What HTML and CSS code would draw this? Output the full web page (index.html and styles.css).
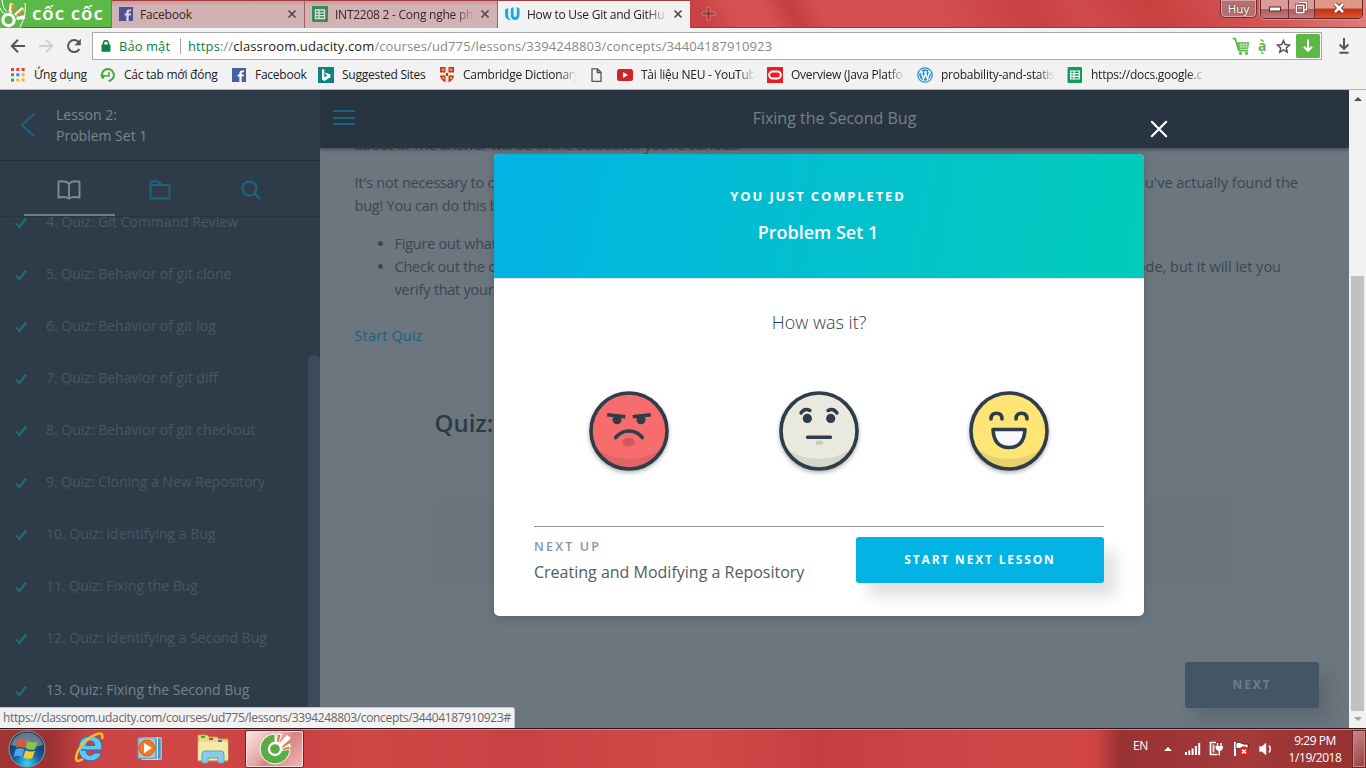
FILE: index.html
```html
<!DOCTYPE html>
<html lang="vi">
<head>
<meta charset="utf-8">
<title>How to Use Git and GitHub</title>
<link rel="stylesheet" href="styles.css">
</head>
<body>
<div class="screen">
  <div class="tabstrip">
    <div class="brand">
      <svg width="28" height="28" viewBox="0 0 28 28"><path d="M0 0h24Q28 14 22 28H0z" fill="#5cb947"/><path d="M2 0Q3 9 7 12M0 8Q2 13 5 14M25 3Q27 14 20 27" fill="none" stroke="#fff" stroke-width="1"/><circle cx="8.500" cy="20" r="5.600" fill="none" stroke="#fff" stroke-width="3.200"/><path d="M8.500 12L10 3l4 1-2 9zM14 14l8-7 3 3-9 6zM16 17l9-2v4l-8 1z" fill="#fff"/><path d="M11 11l.6-7 2.600.5-1.400 7zM16 14.500l7-5.500 1 2-6.500 4.500z" fill="#f58220"/></svg>
      <span class="brand-name">cốc cốc</span>
    </div>
    <div class="tab">
      <svg class="fav" width="14" height="14" viewBox="0 0 14 14"><path d="M0 0h14v14H0z" fill="#4c5298"/><path d="M9.600 14V8.600h2l.3-2H9.600V5.300q0-1 1-1h1.400V2.400h-2q-2.600 0-2.600 2.600v1.600H5.600v2h1.800V14z" fill="#e8d5dc"/></svg>
      <span class="tab-title t1">Facebook</span>
      <svg class="x" width="10" height="10" viewBox="0 0 10 10"><path d="M1.500 1.500l7 7m0-7l-7 7"/></svg>
    </div>
    <div class="tab">
      <svg class="fav" width="16" height="16" viewBox="0 0 16 16"><rect width="16" height="16" rx="1" fill="#2f8f57"/><path d="M3.500 4h9v8.500h-9zM3.500 6.800h9M3.500 9.600h9M7 4v8.500" fill="none" stroke="#e9dada" stroke-width="1.300"/></svg>
      <span class="tab-title t2">INT2208 2 - Cong nghe ph</span>
      <svg class="x" width="10" height="10" viewBox="0 0 10 10"><path d="M1.500 1.500l7 7m0-7l-7 7"/></svg>
    </div>
    <div class="tab active">
      <svg class="fav" width="16" height="16" viewBox="0 0 16 16"><path d="M1 3.600L4.200 2v7Q4.200 12.500 7 14.500 1 13.500 1 8.500zM6.800 2.600L9.600 1v8.500q.2 1.500 1.600 1.500 1.600-.3 1.600-2.500V1L15.500 2.500v6.500q-.4 5-4.500 5-4.200-.4-4.200-4.500z" fill="#16addb"/></svg>
      <span class="tab-title t3">How to Use Git and GitHu</span>
      <svg class="x" width="10" height="10" viewBox="0 0 10 10"><path d="M1.500 1.500l7 7m0-7l-7 7"/></svg>
    </div>
    <svg class="plus" width="15" height="15" viewBox="0 0 15 15"><path d="M6 1h3v5h5v3H9v5H6V9H1V6h5z" fill="#973a3c" stroke="#dd8587" stroke-width=".8"/></svg>
    <div class="caption">
      <span class="user">Huy</span>
      <div class="wbtns">
        <span class="wb min"><svg width="14" height="14" viewBox="0 0 14 14"><rect x="1.500" y="6" width="11" height="4" fill="#fff" stroke="#5b2626"/></svg></span>
        <span class="wb max"><svg width="13" height="13" viewBox="0 0 14 14"><path d="M4.500 1.500h8v8h-2M1.500 4.500h8v8h-8z" fill="none" stroke="#5b2626" stroke-width="3"/><path d="M4.500 1.500h8v8h-2M1.500 4.500h8v8h-8z" fill="none" stroke="#fff" stroke-width="1.700"/></svg></span>
        <span class="wb close"><svg width="14" height="12" viewBox="0 0 14 12"><path d="M3 2l8 8m0-8l-8 8" stroke="#5b2626" stroke-width="4.500"/><path d="M3 2l8 8m0-8l-8 8" stroke="#fff" stroke-width="2.700"/></svg></span>
      </div>
    </div>
  </div>

  <div class="toolbar">
    <svg class="nav n1" width="16" height="16" viewBox="0 0 16 16"><path d="M15 8H2M8 1.800L1.800 8 8 14.200" fill="none" stroke="#555" stroke-width="2"/></svg>
    <svg class="nav n2" width="16" height="16" viewBox="0 0 16 16"><path d="M1 8h13M8 1.800L14.200 8 8 14.200" fill="none" stroke="#d0d0d0" stroke-width="2"/></svg>
    <svg class="nav n3" width="16" height="16" viewBox="0 0 16 16"><path d="M13.300 11A6 6 0 1 1 12.500 4" fill="none" stroke="#555" stroke-width="2"/><path d="M14.800.8v6.400H8.500z" fill="#555"/></svg>
    <div class="omnibox">
      <svg class="lock" width="10" height="12" viewBox="0 0 10 12"><rect x=".5" y="4.500" width="9" height="7.300" rx=".8" fill="#0b8043"/><path d="M2.500 5V3.200a2.500 2.500 0 0 1 5 0V5" fill="none" stroke="#0b8043" stroke-width="1.500"/></svg>
      <span class="secure">Bảo mật</span>
      <span class="sep"></span>
      <span class="url"><span class="scheme">https</span>://<span class="host">classroom.udacity.com</span>/courses/ud775/lessons/3394248803/concepts/34404187910923</span>
      <div class="omni-icons">
        <svg width="20" height="19" viewBox="0 0 18 18"><path d="M1 1.500h2.500L7 13h9" fill="none" stroke="#5fb64c" stroke-width="1.700"/><path d="M4.500 5H17l-1.500 6.500h-9z" fill="#5fb64c"/><path d="M7 7h9M7.500 9.300h8M9 6v5M11.500 6v5M14 6v5" stroke="#d8efd2" stroke-width=".7"/><circle cx="8.500" cy="15.500" r="1.500" fill="#5fb64c"/><circle cx="14.200" cy="15.500" r="1.500" fill="#5fb64c"/></svg>
        <span class="viet">ạ̀</span>
        <svg width="15" height="15" viewBox="0 0 14 14"><path d="M7 1.500l1.600 3.700 4 .4-3 2.700.9 4L7 10.200l-3.500 2.100.9-4-3-2.700 4-.4z" fill="none" stroke="#555" stroke-width="1.400"/></svg>
        <svg class="dl" width="24" height="24" viewBox="0 0 24 24"><rect width="24" height="24" rx="1.500" fill="#5cb947"/><path d="M12 5.500v11M8 12.800l4 4 4-4" fill="none" stroke="#fff" stroke-width="2"/></svg>
      </div>
    </div>
    <svg class="dlbtn" width="12" height="16" viewBox="0 0 12 16"><path d="M6 0v11M1.700 6.500L6 10.800l4.300-4.300M1.500 14.800h9" fill="none" stroke="#555" stroke-width="2"/></svg>
  </div>

  <div class="bookmarks">
    <div class="bm b1"><svg width="14" height="14" viewBox="0 0 14 14"><path d="M0 0h3v3H0zM5.300 0h3v3h-3zM10.600 0h3v3h-3z" fill="#e94235"/><path d="M0 5.300h3v3H0z" fill="#34a853"/><path d="M5.300 5.300h3v3h-3z" fill="#4285f4"/><path d="M10.600 5.300h3v3h-3zM5.300 10.600h3v3h-3zM10.600 10.600h3v3h-3z" fill="#f7b529"/><path d="M0 10.600h3v3H0z" fill="#34a853"/></svg><span>Ứng dụng</span></div>
    <div class="bm b2"><svg width="16" height="14" viewBox="0 0 16 14"><path d="M3 10.500A6 6 0 1 1 8.500 13" fill="none" stroke="#4ba43f" stroke-width="2"/><path d="M0 7h6L3 11z" fill="#4ba43f"/><path d="M9 4v4H5.500" fill="none" stroke="#4ba43f" stroke-width="1.500"/></svg><span>Các tab mới đóng</span></div>
    <div class="bm b3"><svg width="14" height="14" viewBox="0 0 14 14"><path d="M0 0h14v14H0z" fill="#4560a0"/><path d="M9.600 14V8.600h2l.3-2H9.600V5.300q0-1 1-1h1.400V2.400h-2q-2.600 0-2.600 2.600v1.600H5.600v2h1.800V14z" fill="#fff"/></svg><span>Facebook</span></div>
    <div class="bm b4"><svg width="16" height="16" viewBox="0 0 16 16"><path d="M0 0h16v16H0z" fill="#0b8484"/><path d="M4 2l2.300.8v7.500L9.500 8.500 8 7.700 7 5.500l5.500 2v2.700L6.300 14 4 12.500z" fill="#fff"/></svg><span>Suggested Sites</span></div>
    <div class="bm b5"><svg width="14" height="16" viewBox="0 0 14 16"><path d="M0 0h14v9q-1 5-7 7-6-2-7-7z" fill="#c23a2c"/><path d="M5.500 0h3v16h-3zM0 5.500h14v3H0z" fill="#f3e8dd"/><path d="M2 2l2 1.500M10 2l2 1.500M2.500 11h2M10 11h2" stroke="#f0b93a" stroke-width="2"/><path d="M6 6h2v3H6z" fill="#a83b30"/></svg><span class="fade">Cambridge Dictionary</span></div>
    <div class="bm b6"><svg width="11" height="14" viewBox="0 0 11 14"><path d="M1 .8h5.500L10 4.300v9H1zM6.300.8v3.700H10" fill="none" stroke="#555" stroke-width="1.300"/></svg></div>
    <div class="bm b7"><svg width="16" height="12" viewBox="0 0 16 12"><rect width="16" height="12" rx="2.500" fill="#cf2422"/><path d="M6 3l5 3-5 3z" fill="#fff"/></svg><span class="fade">Tài liệu NEU - YouTub</span></div>
    <div class="bm b8"><svg width="16" height="16" viewBox="0 0 16 16"><path d="M0 0h16v16H0z" fill="#eb1c24"/><rect x="2.200" y="4.500" width="11.600" height="7" rx="3.500" fill="none" stroke="#fff" stroke-width="2"/></svg><span class="fade">Overview (Java Platfo</span></div>
    <div class="bm b9"><svg width="16" height="16" viewBox="0 0 16 16"><circle cx="8" cy="8" r="7.200" fill="#fff" stroke="#2494c4" stroke-width="1.300"/><circle cx="8" cy="8" r="5.800" fill="#2494c4"/><path d="M3 5h3M4 5l2.500 7L8.300 7M7 5h3M8 5l2.500 7 2-6.500q-1-1-.5-2" fill="none" stroke="#fff" stroke-width="1.400"/></svg><span class="fade">probability-and-statis</span></div>
    <div class="bm b10"><svg width="16" height="16" viewBox="0 0 16 16"><rect width="14.500" height="16" x=".5" rx="1" fill="#109d58"/><path d="M3.700 4h8.500v8H3.700zM3.700 6.700h8.500M3.700 9.400h8.500M7 4v8" fill="none" stroke="#fff" stroke-width="1.200"/></svg><span class="fade">https://docs.google.c</span></div>
  </div>

  <div class="page">
    <aside class="sidebar">
      <div class="lesson">
        <svg width="16" height="26" viewBox="0 0 16 26"><path d="M14.500 1.500L2 13l12.500 11.500" fill="none" stroke="#1f6281" stroke-width="2"/></svg>
        <div class="lesson-name">Lesson 2:<br>Problem Set 1</div>
      </div>
      <div class="side-tabs">
        <div class="stab on"><svg width="24" height="20" viewBox="0 0 24 20"><path d="M12 3.500Q8 .2 1.500 1.700v16Q8 16 12 18.500 16 16 22.500 17.700v-16Q16 .2 12 3.500zM12 3.500v15" fill="none" stroke="#7f8990" stroke-width="1.900" stroke-linejoin="round"/></svg></div>
        <div class="stab"><svg width="22" height="20" viewBox="0 0 22 20"><path d="M1.500 16V3q0-1.500 1.500-1.500h6L12.500 5H19q1.500 0 1.500 1.500V17q0 1.500-1.500 1.500H3q-1.500 0-1.500-1.500V5h12" fill="none" stroke="#1f6281" stroke-width="2"/></svg></div>
        <div class="stab"><svg width="20" height="20" viewBox="0 0 20 20"><circle cx="8.500" cy="8.500" r="7" fill="none" stroke="#1f6281" stroke-width="2.100"/><path d="M13.800 13.800l5 5" stroke="#1f6281" stroke-width="2.400"/></svg></div>
      </div>
      <div class="list">
        <div class="items">
          <div class="item"><svg class="check" width="12" height="12" viewBox="0 0 12 12"><path d="M1 6.500L4.500 10 11 1.500"/></svg>4. Quiz: Git Command Review</div>
          <div class="item"><svg class="check" width="12" height="12" viewBox="0 0 12 12"><path d="M1 6.500L4.500 10 11 1.500"/></svg>5. Quiz: Behavior of git clone</div>
          <div class="item"><svg class="check" width="12" height="12" viewBox="0 0 12 12"><path d="M1 6.500L4.500 10 11 1.500"/></svg>6. Quiz: Behavior of git log</div>
          <div class="item"><svg class="check" width="12" height="12" viewBox="0 0 12 12"><path d="M1 6.500L4.500 10 11 1.500"/></svg>7. Quiz: Behavior of git diff</div>
          <div class="item"><svg class="check" width="12" height="12" viewBox="0 0 12 12"><path d="M1 6.500L4.500 10 11 1.500"/></svg>8. Quiz: Behavior of git checkout</div>
          <div class="item"><svg class="check" width="12" height="12" viewBox="0 0 12 12"><path d="M1 6.500L4.500 10 11 1.500"/></svg>9. Quiz: Cloning a New Repository</div>
          <div class="item"><svg class="check" width="12" height="12" viewBox="0 0 12 12"><path d="M1 6.500L4.500 10 11 1.500"/></svg>10. Quiz: Identifying a Bug</div>
          <div class="item"><svg class="check" width="12" height="12" viewBox="0 0 12 12"><path d="M1 6.500L4.500 10 11 1.500"/></svg>11. Quiz: Fixing the Bug</div>
          <div class="item"><svg class="check" width="12" height="12" viewBox="0 0 12 12"><path d="M1 6.500L4.500 10 11 1.500"/></svg>12. Quiz: Identifying a Second Bug</div>
          <div class="item current"><svg class="check" width="12" height="12" viewBox="0 0 12 12"><path d="M1 6.500L4.500 10 11 1.500"/></svg>13. Quiz: Fixing the Second Bug</div>
        </div>
        <div class="side-thumb"></div>
      </div>
    </aside>
    <main class="main">
      <header class="top">
        <div class="burger"><i></i><i></i><i></i></div>
        <h1>Fixing the Second Bug</h1>
      </header>
      <div class="content">
        <p class="cut">about it. The answer will be in the solution if you're curious.</p>
        <div class="para">
          <div class="line l1"><span>It's not necessary to c</span><span class="tail">you've actually found the</span></div>
          <div class="line"><span>bug! You can do this b</span></div>
        </div>
        <ul>
          <li>Figure out what</li>
          <li><div class="line l2"><span>Check out the c</span><span class="tail">ode, but it will let you</span></div>verify that your</li>
        </ul>
        <a class="start">Start Quiz</a>
        <h2>Quiz:</h2>
        <div class="quizbox"></div>
      </div>
      <footer class="foot"><button class="next">NEXT</button></footer>
    </main>
    <div class="scrollbar"><i class="up"></i><div class="thumb"></div><i class="down"></i></div>

    <svg class="modal-x" width="18" height="18" viewBox="0 0 18 18"><path d="M1.800 1.800l14.400 14.400m0-14.400L1.800 16.200" stroke="#fff" stroke-width="2.200" stroke-linecap="round"/></svg>
    <section class="modal">
      <div class="mhead"><div class="done">YOU JUST COMPLETED</div><div class="what">Problem Set 1</div></div>
      <div class="how">How was it?</div>
      <div class="faces">
        <svg class="face" width="80" height="80" viewBox="0 0 80 80"><circle cx="40" cy="40" r="38" fill="#f76d6d"/><path d="M5 55Q20 68 40 68T75 55Q66 78 40 78T5 55z" fill="#e16467"/><circle cx="40" cy="40" r="38" fill="none" stroke="#2e3d49" stroke-width="3.600"/><g fill="none" stroke="#2e3d49" stroke-width="3.600" stroke-linecap="round"><path d="M20 24l14.500 1.500M60 24L45.500 25.500" stroke-linecap="square"/><path d="M26.700 46.500Q32 40 40 40t13.300 6.500"/></g><circle cx="28" cy="28.700" r="4.500" fill="#2e3d49"/><circle cx="52" cy="28.700" r="4.500" fill="#2e3d49"/><ellipse cx="39.700" cy="51" rx="6.200" ry="4.300" fill="#cf5a5d"/></svg>
        <svg class="face" width="80" height="80" viewBox="0 0 80 80"><circle cx="40" cy="40" r="38" fill="#e9e9e0"/><path d="M5 55Q20 68 40 68T75 55Q66 78 40 78T5 55z" fill="#d6d6cc"/><circle cx="40" cy="40" r="38" fill="none" stroke="#2e3d49" stroke-width="3.600"/><g fill="none" stroke="#2e3d49" stroke-width="3.400" stroke-linecap="round"><path d="M22 22Q25.500 16.500 31 19.500M58 22Q54.500 16.500 49 19.500M28.500 46.300h23"/></g><circle cx="28.300" cy="27.400" r="4.600" fill="#2e3d49"/><circle cx="51.700" cy="27.400" r="4.600" fill="#2e3d49"/><rect x="36.700" y="49.800" width="7.300" height="4" rx="1.500" fill="#c8c8c0"/></svg>
        <svg class="face" width="80" height="80" viewBox="0 0 80 80"><circle cx="40" cy="40" r="38" fill="#ffe575"/><path d="M5 55Q20 68 40 68T75 55Q66 78 40 78T5 55z" fill="#e8d16f"/><circle cx="40" cy="40" r="38" fill="none" stroke="#2e3d49" stroke-width="3.600"/><g fill="none" stroke="#2e3d49" stroke-width="3.600" stroke-linecap="round" stroke-linejoin="round"><path d="M22 28q0-5.700 5.500-5.700T33 28M47 28q0-5.700 5.500-5.700T58 28"/><path d="M24 38.500h32Q55 56.500 40 56.500T24 38.500z" fill="#f8f9fc"/></g></svg>
      </div>
      <div class="mfoot">
        <div class="up-next"><div class="lbl">NEXT UP</div><div class="nm">Creating and Modifying a Repository</div></div>
        <button class="go">START NEXT LESSON</button>
      </div>
    </section>
    <div class="status">https://classroom.udacity.com/courses/ud775/lessons/3394248803/concepts/34404187910923#</div>
  </div>

  <div class="taskbar">
    <div class="tb orb"><svg width="38" height="38" viewBox="0 0 38 38"><defs><radialGradient id="o" cx=".5" cy=".9" r=".8"><stop offset="0" stop-color="#35d6f8"/><stop offset=".45" stop-color="#17609d"/><stop offset="1" stop-color="#142f4a"/></radialGradient></defs><circle cx="19" cy="19" r="18" fill="url(#o)" stroke="#8ba3b3"/><path d="M3 15A16.500 16.500 0 0 1 35 15Q19 20 3 15z" fill="#fff" opacity=".35"/><path d="M10 10.500q4.500-2.500 8.500 0L16.500 18q-4-2.500-8.500 0z" fill="#e8572a"/><path d="M19.800 11q4.500 2.500 9.700.5l-2.200 7.500q-5 2-9.500-.7z" fill="#8cc63f"/><path d="M7.600 19.500q4.400-2.600 8.500 0l-2.200 7.500q-4-2.500-8.300 0z" fill="#4ea6e6"/><path d="M17.500 20.200q4.500 2.400 9.400.5L24.500 28q-4.500 2-9.200-.6z" fill="#fdc72f"/></svg></div>
    <div class="tb ie"><svg width="32" height="32" viewBox="0 0 32 32"><path d="M8 19H29Q30 5 17 5 5.500 6 5.500 17.500 6 29 17.500 30q8.500-.5 11-8H21q-1 2.500-3.700 2.500-4.300 0-4.300-5.500zM13 14.500q.5-4.500 4.300-4.500 4.200 0 4.500 4.500z" fill="#5cc8f3" stroke="#1677b9" fill-rule="evenodd"/><path d="M29 8Q31 1 24 3 12 7 5 20q-4 9 0 10 2 0 5-2" fill="none" stroke="#f6bc26" stroke-width="2.500"/></svg></div>
    <div class="tb wmp"><svg width="28" height="26" viewBox="0 0 30 28"><path d="M9 2h17v23H9z" fill="#4c93bb" stroke="#c8e5f4"/><path d="M5 2h17v23H5z" fill="#6aadcf" stroke="#d9eef8"/><path d="M1 2h19v22H1z" fill="#a9c5d5" stroke="#5d9abc"/><circle cx="10.500" cy="13" r="8.500" fill="#f27a1c" stroke="#dc5b0b"/><path d="M7.500 7.500L16 13l-8.500 5.500z" fill="#fff"/></svg></div>
    <div class="tb exp"><svg width="34" height="30" viewBox="0 0 34 30"><path d="M2 4V1h9l2 2h8l2 2h9v22H2z" fill="#efd882" stroke="#b99c45"/><path d="M2 8h30v18H2z" fill="#f7e9a5"/><path d="M5 2h4v2H5z" fill="#20b14b"/><path d="M13 4h4v2h-4z" fill="#d93c2b"/><path d="M22 6h4v2h-4z" fill="#2b83d9"/><path d="M6 29V20q0-3 3-3h16q3 0 3 3v9h-6v-5H12v5z" fill="#8acbe8" stroke="#5b9fbf"/></svg></div>
    <div class="tb coc"><svg width="34" height="34" viewBox="0 0 34 34"><path d="M17 2A15 15 0 1 0 32 17L21 19a4.500 4.500 0 1 1-4-6z" fill="#5aad43" stroke="#fff" stroke-width="1"/><circle cx="17" cy="17" r="6" fill="#5aad43" stroke="#fff" stroke-width="2.300"/><path d="M17 10l2-9 5 1-3 10zM21 12l8-9 4 3-9 9zM24 16l8-5 1 4-8 3z" fill="#fff"/><path d="M18.800 9.500l1-7 2.700.6-1.700 7zM24.500 14l6-5 1 2-6 4zM25 16.500l6-2 .2 2-6 1.500z" fill="#ee7630"/></svg></div>
    <div class="tray">
      <span class="lang">EN</span>
      <i class="tri"></i>
      <svg class="s1" width="16" height="12" viewBox="0 0 16 12"><path d="M0 9h2v3H0zM3.300 7.500h2V12h-2zM6.600 5.500h2V12h-2zM9.900 3h2v9h-2zM13.200 0h2v12h-2z" fill="#fff"/></svg>
      <svg class="s2" width="15" height="15" viewBox="0 0 15 15"><path d="M7 1.500H1.500v12h7" fill="none" stroke="#fff" stroke-width="1.700"/><path d="M3.500 3.500h2v8h-2z" fill="#ddd"/><path d="M8.500 2v3M12 2v3M10.300 9v5.500" stroke="#fff" stroke-width="1.400"/><path d="M6.500 5h7.500v2q-.8 3-3.700 3T6.500 7z" fill="#fff"/></svg>
      <svg class="s3" width="17" height="16" viewBox="0 0 17 16"><path d="M2 1v14" stroke="#fff" stroke-width="2"/><path d="M3 2q3-1.500 5 0 3 2 7 1v6q-4 1-7-1-2-1.500-5 0z" fill="#fff" stroke="#222" stroke-width=".8"/><circle cx="11" cy="10.500" r="5.300" fill="#e31c1c"/><path d="M9 8.500l4 4m0-4l-4 4" stroke="#fff" stroke-width="1.700"/></svg>
      <svg class="s4" width="13" height="14" viewBox="0 0 13 14"><path d="M.5 4.500H3L7 1v12L3 9.500H.5z" fill="#fff" stroke="#ddd" stroke-width=".5"/><path d="M10 3.500q2.500 3.500 0 7" fill="none" stroke="#fff" stroke-width="1.400"/></svg>
      <div class="clock">9:29 PM<br>1/19/2018</div>
      <div class="peek"></div>
    </div>
  </div>
</div>
</body>
</html>
```
FILE: styles.css
```css
* { box-sizing: border-box; }
body { margin: 0; font-family: "Open Sans", "Noto Sans", sans-serif; }
svg { display: block; flex: none; }
button { border: 0; padding: 0; font-family: inherit; }
.screen { width: 1366px; height: 768px; overflow: hidden; display: flex; flex-direction: column; background: #6c767e; }

.tabstrip { height: 28px; flex: none; display: flex; background: linear-gradient(60deg, #c43f40 0, #c94142 51%, #d55253 54%, #d55253 56%, #c23f40 58%, #d35051 60%, #d35051 68%, #c94142 75%, #d04b4c 79%, #c84040 84%, #d65859 93%, #e08181 100%); border-bottom: 1px solid #a43738; font-size: 12px; }
.brand { width: 111px; background: #5cb947; display: flex; align-items: center; }
.brand-name { color: #fff; font-family: "Noto Sans", sans-serif; font-weight: 600; font-size: 18.500px; line-height: 24px; margin: 0 0 1px 4px; white-space: nowrap; letter-spacing: 1px; }
.tab { width: 193px; height: 28px; background: linear-gradient(#c89b9b, #d2b3b3 5px); border-left: 1px solid #a95a5b; border-top: 1px solid #9f3b3c; display: flex; align-items: center; padding: 0 7px 1px 7px; color: #3a2428; }
.tab.active { background: #f2f2f2; color: #222; padding-left: 6px; }
.fav { margin-right: 7px; }
.tab-title { flex: 1; white-space: nowrap; letter-spacing: -.2px; margin-right: 5px; }
.t2, .t3 { letter-spacing: -.25px; -webkit-mask-image: linear-gradient(90deg, #000 85%, transparent); mask-image: linear-gradient(90deg, #000 85%, transparent); }
.x path { fill: none; stroke: #57474a; stroke-width: 1.700; }
.plus { margin: 6px 0 0 11px; }
.caption { margin-left: auto; display: flex; padding-right: 3px; gap: 3px; color: #fff; }
.user { width: 37px; height: 18px; border: 1px solid #723033; border-top: 0; border-radius: 0 0 5px 5px; background: #b5716f; box-shadow: inset 0 0 0 1px #dba4a4; text-align: center; font-size: 11.500px; line-height: 17px; text-shadow: 0 0 2px #333; }
.wbtns { display: flex; height: 19px; border: 1px solid #5f2628; border-top: 0; border-radius: 0 0 5px 5px; overflow: hidden; box-shadow: 0 0 0 1px #dd8f8f; }
.wb { display: flex; align-items: center; justify-content: center; width: 28px; background: linear-gradient(#d99b9b 50%, #ad5a5a 50%, #c77878); border-right: 1px solid #723033; padding-bottom: 3px; }
.max { width: 26px; }
.close { width: 47px; background: linear-gradient(#df9886 45%, #c03118 50%, #e0512d); border: 0; }

.toolbar { height: 33px; flex: none; background: #f2f2f2; display: flex; align-items: center; padding: 3px 16px 0 10px; }
.n1 { margin-right: 12px; } .n2 { margin-right: 12px; } .n3 { margin-right: 10px; }
.omnibox { width: 1230px; height: 28px; background: #fff; border: 1px solid #a9a9a9; display: flex; align-items: center; padding: 0 1px 0 8px; font-size: 13px; white-space: nowrap; }
.secure { color: #0b8043; margin-left: 8px; width: 52px; letter-spacing: .05px; }
.sep { width: 1px; height: 16px; background: #aaa; margin: 0 7px 0 9px; }
.url { color: #888; width: 590px; letter-spacing: .11px; }
.scheme { color: #0b8043; } .host { color: #222; }
.omni-icons { margin-left: auto; display: flex; align-items: center; }
.viet { color: #5fb64c; font-family: "Noto Sans", sans-serif; font-weight: 700; font-size: 14px; line-height: 22px; width: 8px; margin: 0 10px 0 7px; }
.dl { margin-left: 5px; }
.dlbtn { margin-left: auto; }

.bookmarks { height: 29px; flex: none; background: #f2f2f2; border-bottom: 1px solid #b5b5b5; display: flex; align-items: center; padding-left: 11px; font-size: 12px; color: #222; }
.bm { display: flex; align-items: center; gap: 9px; flex: none; white-space: nowrap; letter-spacing: -.25px; padding-bottom: 1px; }
.b1 { width: 89px; } .b2 { width: 132px; gap: 8px; } .b3 { width: 86px; } .b4 { width: 122px; gap: 8px; } .b5 { width: 151px; } .b6 { width: 26px; } .b7 { width: 150px; gap: 8px; } .b8 { width: 150px; gap: 8px; } .b9 { width: 150px; gap: 8px; } .b10 { width: 150px; gap: 8px; }
.fade { width: 114px; -webkit-mask-image: linear-gradient(90deg, #000 85%, transparent); mask-image: linear-gradient(90deg, #000 85%, transparent); }

.page { height: 638px; flex: none; display: flex; position: relative; }
.sidebar { width: 320px; height: 638px; background: #2e3c49; display: flex; flex-direction: column; color: #7b858c; }
.lesson { height: 71px; border-bottom: 1px solid #24303b; display: flex; align-items: center; padding-left: 20px; gap: 20px; }
.lesson-name { font-size: 14px; line-height: 21px; }
.side-tabs { height: 56px; border-bottom: 1px solid #27333e; display: flex; padding-left: 24px; flex: none; }
.stab { width: 91px; display: flex; align-items: center; justify-content: center; padding: 5px 2px 0 0; border-bottom: 2px solid transparent; }
.stab.on { border-color: #717b83; }
.list { flex: 1; overflow: hidden; display: flex; min-height: 0; }
.items { width: 308px; margin-top: -22px; }
.item { height: 52px; display: flex; align-items: center; font-size: 14px; color: #4a5660; white-space: nowrap; }
.item.current { color: #76818a; }
.check { margin: 4px 19px 0 15px; fill: none; stroke: #1f6d6d; stroke-width: 2.300; }
.side-thumb { width: 12px; height: 380px; margin-top: 138px; background: #3d4c5b; border-radius: 6px 6px 0 0; }

.main { width: 1029px; height: 638px; background: #6c767e; display: flex; flex-direction: column; overflow: hidden; }
.top { height: 58px; flex: none; background: #28343f; box-shadow: 0 1px 4px rgba(20,30,40,.6); display: flex; align-items: center; padding: 0 13px; z-index: 1; }
.burger { display: grid; gap: 4.500px; width: 22px; margin-top: -3px; }
.burger i { height: 2px; background: #1f6281; }
.top h1 { flex: 1; margin: -2px 22px 0 0; text-align: center; font-size: 16px; font-weight: 400; color: #76818a; }
.content { padding: 0 51px 0 34.500px; font-size: 14.500px; letter-spacing: -.24px; line-height: 23px; color: #3a4650; flex: 1; min-height: 0; }
.content p { margin: -15px 0 15px; }
.line { display: flex; justify-content: space-between; white-space: nowrap; }
.l2 { margin-right: 17px; }
.tail { letter-spacing: 0; }
.content ul { margin: 15px 0 23px; padding-left: 40px; }
.start { color: #205f7e; display: block; letter-spacing: .15px; }
.content h2 { margin: 49px 0 0 80px; font-size: 24px; font-weight: 560; letter-spacing: 0; line-height: 30px; color: #2e3b47; padding-top: 12px; }
.quizbox { height: 84px; background: #6a747c; margin: 63px 62px 0 80px; }
.foot { height: 85px; flex: none; display: flex; justify-content: flex-end; padding: 18px 30px 0; border-top: 1px solid #69737b; }
.next { width: 134px; height: 46px; background: #445565; border-radius: 3px; color: #6f7d88; font-size: 12px; font-weight: 700; letter-spacing: 1.900px; padding-bottom: 2px; box-shadow: 10px 12px 15px rgba(46,61,73,.22); }
.scrollbar { width: 17px; background: #f1f1f1; display: flex; flex-direction: column; align-items: center; }
.up { border: 4px solid transparent; border-top: 0; border-bottom: 4px solid #505050; margin: 7px 0 175px; }
.thumb { width: 13px; height: 435px; background: #c1c1c1; }
.down { border: 4px solid transparent; border-bottom: 0; border-top: 4px solid #a0a0a0; margin-top: 6px; }

.modal-x { position: absolute; left: 1150px; top: 30px; z-index: 3; }
.modal { position: absolute; left: 494px; top: 64px; width: 650px; height: 462px; background: #fff; border-radius: 5px; overflow: hidden; box-shadow: 0 2px 10px rgba(46,61,73,.3); z-index: 2; }
.mhead { height: 125px; border-bottom: 1px solid #dbe2e8; background: linear-gradient(100deg, #02b3e4, #02ccba); color: #fff; text-align: center; padding-top: 32px; }
.done { font-size: 13px; font-weight: 700; line-height: 20px; letter-spacing: 1.850px; padding-right: 2px; }
.what { font-size: 18px; font-weight: 600; line-height: 24px; margin: 14px 2px 0 0; }
.how { text-align: center; font-size: 18px; font-weight: 300; color: #2e3d49; line-height: 24px; margin-top: 31px; }
.faces { display: flex; justify-content: center; gap: 110px; margin-top: 57px; }
.face { filter: drop-shadow(0 2px 2px rgba(0,0,0,.3)); }
.mfoot { margin: 55px 40px 0; border-top: 1px solid #969696; display: flex; justify-content: space-between; padding-top: 10px; }
.lbl { font-size: 12.500px; font-weight: 600; color: #8097ad; letter-spacing: 2.200px; line-height: 20px; }
.nm { font-size: 16px; color: #525c65; line-height: 24px; margin-top: 3px; white-space: nowrap; }
.go { width: 248px; height: 46px; background: #02b3e4; border-radius: 3px; color: #fff; font-size: 12px; font-weight: 700; letter-spacing: 1.820px; padding-bottom: 2px; box-shadow: 12px 14px 15px rgba(0,0,0,.12); }
.status { position: absolute; left: 0; bottom: 0; width: 515px; height: 21px; background: #f2f2f2; border: 1px solid #c4c4c4; border-left: 0; border-bottom: 0; border-radius: 0 3px 0 0; color: #666; font-size: 12px; line-height: 20px; padding-left: 3px; letter-spacing: -.35px; white-space: nowrap; z-index: 3; }

.taskbar { height: 40px; flex: none; border-top: 1px solid #2f1517; box-shadow: inset 0 1px 0 #d98081; display: flex; align-items: center; background: linear-gradient(90deg, #a13536 0, #9b3233 50px, #cb4344 88px, #d14748 190px, #c84041 290px, #d04647 360px, #c94243 520px, #d24949 700px, #c63f40 820px, #cf4748 1000px, #d04444 1095px, #993233 1120px, #a33a3b 1250px, #942f30 1366px); }
.orb { margin-left: 8px; }
.ie { margin: 0 0 3px 27px; } .wmp { margin-left: 32px; } .exp { margin-left: 31px; }
.coc { margin-left: 15px; width: 59px; height: 38px; border: 1px solid #6d2527; border-radius: 2px; background: linear-gradient(135deg, #fbe9e9, #e6a3a3 45%, #d98283 55%, #efb9ba); box-shadow: inset 0 0 0 1px #f7dada; display: flex; align-items: center; justify-content: center; }
.tray { margin-left: auto; display: flex; align-items: center; height: 39px; color: #fff; font-size: 12px; }
.lang { font-size: 12px; letter-spacing: -.5px; width: 16px; margin: -6px 15px 0 0; }
.tri { border: 4px solid transparent; border-top: 0; border-bottom-color: #fff; margin-right: 13px; }
.s1 { margin-right: 8px; } .s2 { margin-right: 9px; } .s3 { margin-right: 9px; }
.s4 { margin-right: 13px; }
.clock { width: 60px; text-align: center; line-height: 17px; letter-spacing: -.45px; white-space: nowrap; margin-right: 7px; }
.peek { width: 14px; height: 38px; border: 1px solid #6d2527; background: linear-gradient(135deg, #c98a8b, #9b3d3e); box-shadow: inset 0 0 0 1px #c98788; }
```
